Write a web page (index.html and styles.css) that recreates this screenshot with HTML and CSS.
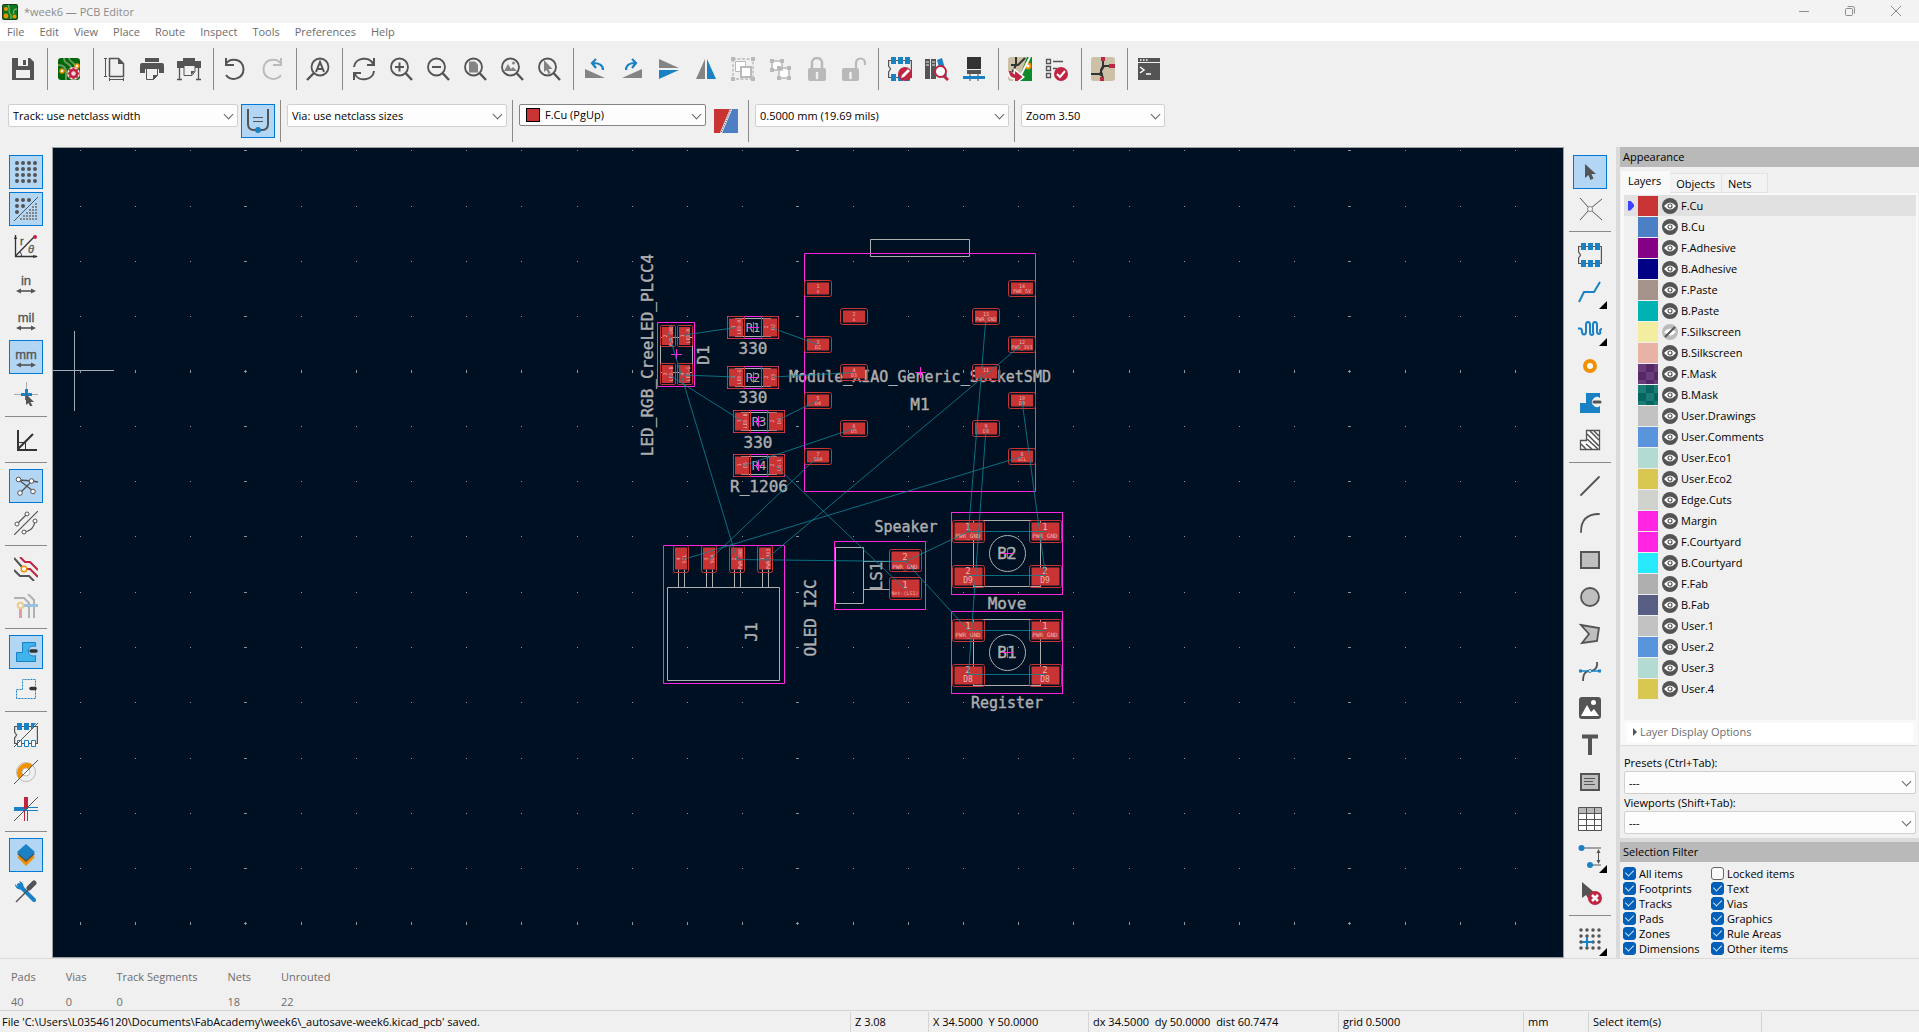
FILE: index.html
```html
<!DOCTYPE html>
<html lang="en">
<head>
    <meta charset="utf-8">
    <title>*week6 — PCB Editor</title>
    <link rel="stylesheet" href="styles.css">
</head>
<body>
    <!-- icon sprite -->
    <svg class="sprite" aria-hidden="true">
        <symbol id="i-app" viewBox="0 0 16 16">
            <rect width="16" height="16" rx="2" fill="#1d3b1f"/><rect x="1" y="1" width="14" height="14" rx="1" fill="#0b7a1c"/>
            <path d="M6 1c3 4-1 7 3 10v4M15 5c-4 0-4 3-3 5" fill="none" stroke="#7fae74" stroke-width="1.3"/>
            <circle cx="4" cy="5" r="2" fill="#f29100"/><circle cx="4" cy="12" r="2.4" fill="#f29100"/><circle cx="12.500" cy="12.500" r="2" fill="#f29100"/>
        </symbol>
        <symbol id="i-save" viewBox="0 0 24 24">
            <path d="M1 1h18l4 4v18H1z" fill="#545454"/><path d="M7 1h10v8H7zM5 13h14v8H5z" fill="#f0f0f0"/><path d="M12 3h3v5h-3z" fill="#545454"/>
        </symbol>
        <symbol id="i-board" viewBox="0 0 24 24">
            <rect x="1" y="1" width="22" height="22" rx="3" fill="#00660b"/>
            <path d="M7 1c0 7 7 5 7 10M12 1c0 4 6 4 6 8M1 8c5 0 8 2 8 7v8" fill="none" stroke="#679b5c" stroke-width="2"/>
            <circle cx="5" cy="14" r="2" fill="#fff" stroke="#f29100" stroke-width="1.500"/><circle cx="20" cy="9" r="2" fill="#fff" stroke="#f29100" stroke-width="1.500"/>
            <circle cx="16.500" cy="16.500" r="6.500" fill="#f5d9dd"/><circle cx="16.500" cy="16.500" r="3.500" fill="none" stroke="#bf2641" stroke-width="2.500"/>
            <path d="M16.500 10.500v3M16.500 19.500v3M10.500 16.500h3M19.500 16.500h3M12.300 12.300l2 2M18.700 18.700l2 2M20.700 12.300l-2 2M12.300 20.700l2-2" stroke="#bf2641" stroke-width="2"/>
        </symbol>
        <symbol id="i-page" viewBox="0 0 24 24">
            <path d="M6.500 1.500h9l5 5v13h-14z" fill="none" stroke="#545454" stroke-width="1.500"/><path d="M15 1v6h6z" fill="#545454"/>
            <path d="M2.500 1.500v18M1 1.500h3M1 19.500h3M6 22.500h15M6.500 21v3M20.500 21v3" stroke="#545454"/>
        </symbol>
        <symbol id="i-print" viewBox="0 0 24 24">
            <path d="M5 1h14v4H5zM2 6h20a2 2 0 0 1 2 2v8h-5v-4H5v4H0V8a2 2 0 0 1 2-2z" fill="#545454"/>
            <path d="M6.500 11.500h11v7l-4 4h-7z" fill="#f0f0f0" stroke="#545454"/><path d="M13 23v-5h5z" fill="#545454"/>
        </symbol>
        <symbol id="i-plot" viewBox="0 0 24 24">
            <path d="M6 1h12v3H6zM0 4h24v7H0z" fill="#545454"/><path d="M7 8.500h11v6l-3 4H7z" fill="#f0f0f0" stroke="#545454"/>
            <path d="M2.500 11v11M21.500 11v11M0 22.500h5M19 22.500h5" stroke="#545454" stroke-width="1.300"/><path d="M14 18v-4h4z" fill="#545454"/>
        </symbol>
        <symbol id="i-undo" viewBox="0 0 24 24">
            <path d="M3 6.500C8 0 20 2 20.500 12 20.500 22 8 25 3 18M3 1v7h8" fill="none" stroke="#545454" stroke-width="2"/>
        </symbol>
        <symbol id="i-redo" viewBox="0 0 24 24">
            <path d="M21 6.500C16 0 4 2 3.500 12 3.500 22 16 25 21 18M21 1v7h-8" fill="none" stroke="#bbb" stroke-width="2"/>
        </symbol>
        <symbol id="i-lens" viewBox="0 0 24 24">
            <circle cx="10.500" cy="10" r="8.500" fill="none" stroke="#545454" stroke-width="1.800"/><path d="M16.500 16l6.500 7" stroke="#545454" stroke-width="2.400"/>
        </symbol>
        <symbol id="i-find" viewBox="0 0 24 24">
            <circle cx="14" cy="10" r="8.500" fill="none" stroke="#545454" stroke-width="1.800"/><path d="M8 16l-7 7" stroke="#545454" stroke-width="2.400"/>
            <path d="M10 15l4-10 4 10M11.500 12h5" fill="none" stroke="#545454" stroke-width="2"/>
        </symbol>
        <symbol id="i-refresh" viewBox="0 0 24 24">
            <path d="M2 10C3 0 18-1 21 7M22 14C21 24 6 25 3 17M22 1v7h-7M2 23v-7h7" fill="none" stroke="#545454" stroke-width="2"/>
        </symbol>
        <symbol id="i-zoomin" viewBox="0 0 24 24"><use href="#i-lens"/><path d="M6 10h9M10.500 5.500v9" stroke="#545454" stroke-width="2"/></symbol>
        <symbol id="i-zoomout" viewBox="0 0 24 24"><use href="#i-lens"/><path d="M6 10h9" stroke="#545454" stroke-width="2"/></symbol>
        <symbol id="i-zoompage" viewBox="0 0 24 24"><use href="#i-lens"/><path d="M6 4.500h6l3 3v8H6z" fill="#848484"/></symbol>
        <symbol id="i-zoomobj" viewBox="0 0 24 24"><use href="#i-lens"/><path d="M4 14l4-7 3 5 2-2 4 4z" fill="#848484"/><circle cx="13.500" cy="6" r="1.500" fill="#848484"/></symbol>
        <symbol id="i-zoomsel" viewBox="0 0 24 24"><use href="#i-lens"/><path d="M7 3v12l2.500-2 2 4 2-1-2-4h4z" fill="#848484"/></symbol>
        <symbol id="i-ccw" viewBox="0 0 24 24"><path d="M2 12v9h20z" fill="#848484"/><path d="M20 13c0-5-4-7-10-7M13 2L9 6l4 5" fill="none" stroke="#1a81c4" stroke-width="2.200"/></symbol>
        <symbol id="i-cw" viewBox="0 0 24 24"><path d="M22 12v9H2z" fill="#848484"/><path d="M6 13c0-5 4-7 9-7M12 2l4 4-4 5" fill="none" stroke="#1a81c4" stroke-width="2.200"/></symbol>
        <symbol id="i-flipv" viewBox="0 0 24 24"><path d="M2 2v9h20z" fill="#848484"/><path d="M2 22v-9h20z" fill="#1a81c4"/></symbol>
        <symbol id="i-fliph" viewBox="0 0 24 24"><path d="M2 22h9V2z" fill="#848484"/><path d="M22 22h-9V2z" fill="#1a81c4"/></symbol>
        <symbol id="i-group" viewBox="0 0 24 24">
            <path d="M2 2h20v20H2z" fill="none" stroke="#b9b9b9" stroke-width="1.300" stroke-dasharray="3 1.500"/><path d="M0 0h4v4H0zM20 0h4v4h-4zM0 20h4v4H0zM20 20h4v4h-4z" fill="#b9b9b9"/>
            <path d="M4.500 4.500h10v10h-10z" fill="#fff" stroke="#b9b9b9"/><path d="M10 10h10v10H10z" fill="#fff" stroke="#b9b9b9" stroke-width="2"/>
        </symbol>
        <symbol id="i-ungroup" viewBox="0 0 24 24">
            <path d="M4 4h10v9H4zM11 11h10v10H11z" fill="#fff" stroke="#b9b9b9" stroke-width="1.500"/>
            <path d="M2 2h4v4H2zM12 2h4v4h-4zM2 11h4v4H2zM9 9h4v4H9zM19 9h4v4h-4zM9 19h4v4H9zM19 19h4v4h-4z" fill="#b9b9b9"/>
        </symbol>
        <symbol id="i-lock" viewBox="0 0 24 24"><path d="M7 12V6a5 5 0 0 1 10 0v6" fill="none" stroke="#b9b9b9" stroke-width="2.500"/><rect x="3" y="11" width="18" height="13" rx="2" fill="#b9b9b9"/><path d="M12 16v5" stroke="#f0f0f0" stroke-width="2.500" stroke-linecap="round"/></symbol>
        <symbol id="i-unlock" viewBox="0 0 24 24"><path d="M14 12V6a4.500 4.500 0 0 1 9 0v2" fill="none" stroke="#b9b9b9" stroke-width="2.200"/><rect x="0" y="11" width="17" height="13" rx="2" fill="#b9b9b9"/><path d="M8.500 16v5" stroke="#f0f0f0" stroke-width="2.500" stroke-linecap="round"/></symbol>
        <symbol id="i-fp" viewBox="0 0 24 24">
            <path d="M.6 3.500h22.800v17H.6V15l2-3-2-3z" fill="none" stroke="#545454" stroke-width="1.200"/>
            <path d="M3 0h5v7H3zM10 0h5v7h-5zM17 0h5v7h-5zM3 17h5v7H3zM10 17h5v7h-5zM17 17h5v7h-5z" fill="#1a81c4"/>
        </symbol>
        <symbol id="i-fpedit" viewBox="0 0 24 24"><use href="#i-fp"/><circle cx="17" cy="17" r="7" fill="#bf2641"/><path d="M13 21l1-3 6-6 2 2-6 6z" fill="#fff"/></symbol>
        <symbol id="i-library" viewBox="0 0 24 24">
            <path d="M0 2h5v20H0zM6 2h5v20H6z" fill="#545454"/><path d="M1 5h3M1 8h3M7 5h3M7 8h3" stroke="#f0f0f0"/><path d="M12 3l5-2 5 18-5 2z" fill="#1a81c4"/>
            <circle cx="15.500" cy="14.500" r="5.500" fill="#fff" stroke="#bf2641" stroke-width="2"/><path d="M19 19l4 4" stroke="#bf2641" stroke-width="3"/>
        </symbol>
        <symbol id="i-3d" viewBox="0 0 24 24"><path d="M5 0h14v12H5z" fill="#333"/><path d="M5 13h14v4H5z" fill="#545454"/><path d="M8 17v7M16 17v7" stroke="#848484" stroke-width="1.500"/><path d="M1 19h22v3H1z" fill="#1a81c4"/></symbol>
        <symbol id="i-sch2pcb" viewBox="0 0 24 24">
            <rect width="24" height="24" rx="3" fill="#ccc0a6"/><path d="M19 0h5v24H10z" fill="#0d8a2a"/><path d="M3 8h7l7-7M8 0v8l-4 8" fill="none" stroke="#333" stroke-width="2"/>
            <circle cx="20" cy="9" r="2.500" fill="#fff" stroke="#f29100" stroke-width="1.800"/><path d="M22 0L10 24" stroke="#fff" stroke-width="2"/>
            <path d="M2 15c0 6 4 5 8 5M8 16l5 4-5 4z" fill="none" stroke="#fff" stroke-width="5"/><path d="M2 14c0 6 4 6 8 6M8 16l5 4-5 4z" fill="#bf2641" stroke="#bf2641" stroke-width="2"/>
        </symbol>
        <symbol id="i-drc" viewBox="0 0 24 24">
            <path d="M1.500 2.500h4v4h-4zM1.500 9.500h4v4h-4zM1.500 16.500h4v4h-4z" fill="none" stroke="#545454" stroke-width="1.300"/><path d="M8 4.500h10M8 11.500h4" stroke="#545454" stroke-width="1.500"/>
            <circle cx="16" cy="17" r="7" fill="#bf2641"/><path d="M12 17l3 3 5-6" fill="none" stroke="#fff" stroke-width="2"/>
        </symbol>
        <symbol id="i-sch" viewBox="0 0 24 24">
            <rect width="24" height="24" rx="3" fill="#ccc0a6"/><path d="M10 0v4h4V0zM18 7h6v4h-6zM9 20h4v4H9z" fill="#bf2641"/><path d="M12 4v5l-2 4v4l2 3M18 9h-5l-3 5M0 17h9" fill="none" stroke="#333" stroke-width="2"/><circle cx="10" cy="17" r="2" fill="#333"/>
        </symbol>
        <symbol id="i-console" viewBox="0 0 24 24"><path d="M1 1h22v4H1zM1 6h22v17H1z" fill="#545454"/><path d="M3 3h1.500M6 3h1.500M9 3h1.500M3 10l4 3-4 3M9 17h5" fill="none" stroke="#fff" stroke-width="1.500"/></symbol>
        <symbol id="i-autotrack" viewBox="0 0 24 24"><path d="M2 0v15q0 6 6 6h8q6 0 6-6V0" fill="none" stroke="#545454" stroke-width="2"/><path d="M7 8.500h10M7 12.500h10" stroke="#545454" stroke-width="1.200"/><circle cx="12" cy="21" r="3" fill="#1a81c4"/></symbol>
        <symbol id="i-pair" viewBox="0 0 24 24"><path d="M0 0h17L7 24H0z" fill="#c83434"/><path d="M18 0h6v24H7z" fill="#4d7fc4"/><path d="M17 0L7 24" stroke="#fff" stroke-width="2"/><path d="M17 0L7 24" stroke="#333" stroke-dasharray="1 1"/></symbol>
        <symbol id="i-grid" viewBox="0 0 24 24"><path d="M3 3h19M3 9h19M3 15h19M3 21h19" stroke="#545454" stroke-width="4" stroke-linecap="round" stroke-dasharray="0 6"/></symbol>
        <symbol id="i-gridover" viewBox="0 0 24 24"><path d="M3 3h13M3 9h8M3 15h1" stroke="#545454" stroke-width="4" stroke-linecap="round" stroke-dasharray="0 6"/><path d="M21 7h2M18 10h5M15 13h8M12 16h11M9 19h14M6 22h17" stroke="#848484" stroke-width="2" stroke-dasharray="2 1"/><path d="M0 24L24 0" stroke="#545454"/></symbol>
        <symbol id="i-polar" viewBox="0 0 24 24"><path d="M1.500 1v21.500H23M1.500 22L20 3" fill="none" stroke="#333" stroke-width="1.300"/><path d="M0 5l1.500-4L3 5zM19 21l5 1.500-5 1.500z" fill="#333"/><path d="M6 18q2 2 1.500 5" fill="none" stroke="#333"/><circle cx="21" cy="3" r="2" fill="#bf2641"/></symbol>
        <symbol id="i-arrows" viewBox="0 0 24 24"><path d="M4 20h16" stroke="#545454" stroke-width="1.600"/><path d="M2 20l5-2.500v5zM22 20l-5-2.500v5z" fill="#545454"/></symbol>
        <symbol id="i-cursor" viewBox="0 0 24 24"><path d="M0 12.500h24M12.500 0v12" stroke="#aaa"/><path d="M7 12.500h11M12.500 7v11" stroke="#1a81c4" stroke-width="3"/><path d="M12 12v11l2.500-2 2 4 2-1-2-4h3.500z" fill="#545454"/></symbol>
        <symbol id="i-angle" viewBox="0 0 24 24"><path d="M4 2v20H23M4 21L19 6" fill="none" stroke="#333" stroke-width="2"/><path d="M5 14.500h6.500V21" fill="none" stroke="#333"/></symbol>
        <symbol id="i-rats" viewBox="0 0 24 24"><path d="M5 6l13 1 6 1M5 6l14 11M18 7L6 19" stroke="#545454" stroke-width="1.300" fill="none"/><g fill="#fff" stroke="#545454"><circle cx="4.500" cy="5.500" r="2.300"/><circle cx="17.500" cy="7" r="2.300"/><circle cx="19" cy="17.500" r="2.300"/><circle cx="6" cy="19" r="2.300"/></g></symbol>
        <symbol id="i-curved" viewBox="0 0 24 24"><path d="M0 24L24 0M3 13L13 3M11 21q9-2 10-11" fill="none" stroke="#545454" stroke-width="1.200"/><g fill="#fff" stroke="#545454"><circle cx="3" cy="13" r="2"/><circle cx="13" cy="3" r="2"/><circle cx="21" cy="10" r="2"/><circle cx="10" cy="21" r="2"/></g></symbol>
        <symbol id="i-netcolor" viewBox="0 0 24 24"><path d="M0 1l8 9M0 13l6 6h9l5 5" fill="none" stroke="#545454" stroke-width="2"/><path d="M6 0l5 5h5l8 8M12 12h4l8 8" fill="none" stroke="#bf2641" stroke-width="2"/><circle cx="10" cy="12" r="2.800" fill="#fff" stroke="#f29100" stroke-width="1.500"/></symbol>
        <symbol id="i-contrast" viewBox="0 0 24 24"><g opacity=".4"><path d="M0 4h10l5 5v15M14 0l6 6v18" fill="none" stroke="#545454" stroke-width="2"/><path d="M8 11.500h16" stroke="#1a81c4" stroke-width="3"/><path d="M6.500 14v10" stroke="#bf2641" stroke-width="3"/><circle cx="6.500" cy="11.500" r="2.800" fill="#fff" stroke="#f29100" stroke-width="2"/></g></symbol>
        <symbol id="i-zonefill" viewBox="0 0 24 24"><path d="M2.500 21.500v-9h6v-10h13v4a5 5 0 1 0 0 9v6z" fill="#3eb3ec" stroke="#1a81c4"/><path d="M17 11h5" stroke="#333" stroke-width="3.500" stroke-linecap="round"/></symbol>
        <symbol id="i-zoneline" viewBox="0 0 24 24"><path d="M2.500 21.500v-9h6v-10h13v19z" fill="none" stroke="#1a81c4" stroke-dasharray="2 1"/><path d="M17 11.500h4" stroke="#333" stroke-width="3.500" stroke-linecap="round"/></symbol>
        <symbol id="i-fpline" viewBox="0 0 24 24"><path d="M.6 3.500h22.800v17H.6V15l2-3-2-3z" fill="none" stroke="#545454" stroke-width="1.200"/><path d="M3 0h5v7H3zM10 0h5v7h-5zM17 0h5l-5 7z" fill="#1a81c4"/><path d="M3.500 17.500h4v6h-4zM10.500 17.500h4v6h-4zM17.500 17.500h4v6h-4z" fill="#fff" stroke="#1a81c4"/><path d="M0 24L24 0" stroke="#545454"/></symbol>
        <symbol id="i-vialine" viewBox="0 0 24 24"><circle cx="12" cy="12" r="9.500" fill="none" stroke="#bbb"/><circle cx="12" cy="12" r="4" fill="#fff" stroke="#bbb"/><path d="M5 19A10 10 0 0 1 19 5l-4 4a4 4 0 0 0-6 6z" fill="#f29100"/><path d="M0 24L24 0" stroke="#545454"/></symbol>
        <symbol id="i-trackline" viewBox="0 0 24 24"><path d="M0 12h13" stroke="#1a81c4" stroke-width="4"/><path d="M12 0v12" stroke="#bf2641" stroke-width="4"/><path d="M13 10.500h11M13 13.500h11" stroke="#1a81c4"/><path d="M10.500 13v11M13.500 13v11" stroke="#bf2641"/><path d="M0 24L24 0" stroke="#545454"/></symbol>
        <symbol id="i-layers" viewBox="0 0 24 24"><path d="M3 14l9 9 9-9-9-4z" fill="#f29100"/><path d="M3 11l9 8 9-8-9-5z" fill="#545454"/><path d="M12 1l9 8-9 8-9-8z" fill="#1a81c4"/></symbol>
        <symbol id="i-tools" viewBox="0 0 24 24"><path d="M5 5l15 15" stroke="#1a81c4" stroke-width="4" stroke-linecap="round"/><path d="M1 4a5.500 5.500 0 0 0 8 5 5.500 5.500 0 0 0-4-8l2 4-3 2z" fill="#1a81c4"/><path d="M2 22L14 10" stroke="#545454" stroke-width="1.500"/><path d="M15 8l5-5" stroke="#545454" stroke-width="5" stroke-linecap="round"/></symbol>
        <symbol id="i-select" viewBox="0 0 24 24"><path d="M7 4v14l3.500-3 2 5 3-1.500-2-4.500H18z" fill="#545454"/></symbol>
        <symbol id="i-local" viewBox="0 0 24 24"><path d="M2 1l9 10M24 2L13 11M2 23l9-10M24 23l-11-10" stroke="#545454"/><circle cx="12" cy="12" r="2.500" fill="#fff" stroke="#848484"/></symbol>
        <symbol id="i-route" viewBox="0 0 24 24"><path d="M1 22L6 12h10l6-10" fill="none" stroke="#1a81c4" stroke-width="2"/></symbol>
        <symbol id="i-tune" viewBox="0 0 24 24"><path d="M0 11.500h2q2 0 2 3t2 3 2-3V8q0-3 2-3t2 3v7q0 3 2 3t1-3V8q0-3 2-3t2 3v6q0 3 2 3t1-3q0-2 2-2h3" fill="none" stroke="#1a81c4" stroke-width="2"/></symbol>
        <symbol id="i-via" viewBox="0 0 24 24"><circle cx="12" cy="12" r="5" fill="#fff" stroke="#f29100" stroke-width="4"/></symbol>
        <symbol id="i-zone" viewBox="0 0 24 24"><path d="M2 22V12h6V2h14v5a5 5 0 1 0 0 8v7z" fill="#1a81c4"/><path d="M16 11h6" stroke="#545454" stroke-width="3" stroke-linecap="round"/></symbol>
        <symbol id="i-rule" viewBox="0 0 24 24"><path d="M2.500 21.500v-9h6v-10h13v19z" fill="#fff" stroke="#545454" stroke-width="1.300"/><path d="M12 3l9 9M9 6l12 12M9 11l11 10M8 16l6 5M3 16l5 5M16 3l5 5" stroke="#545454" stroke-width="1.600"/></symbol>
        <symbol id="i-line" viewBox="0 0 24 24"><path d="M3 21L21 3" stroke="#545454" stroke-width="1.800" stroke-linecap="round"/></symbol>
        <symbol id="i-arc" viewBox="0 0 24 24"><path d="M3 21Q3 3 21 3" fill="none" stroke="#545454" stroke-width="1.800" stroke-linecap="round"/></symbol>
        <symbol id="i-rect" viewBox="0 0 24 24"><path d="M3 4h18v16H3z" fill="#bfbfbf" stroke="#545454" stroke-width="2"/></symbol>
        <symbol id="i-circle" viewBox="0 0 24 24"><circle cx="12" cy="12" r="9" fill="#bfbfbf" stroke="#545454" stroke-width="1.800"/></symbol>
        <symbol id="i-poly" viewBox="0 0 24 24"><path d="M3 3l18 3-2 13-15 2 7-9z" fill="#bfbfbf" stroke="#545454" stroke-width="1.800"/></symbol>
        <symbol id="i-bezier" viewBox="0 0 24 24"><path d="M5 22c0-10 5-10 7-10s8-1 7-9" fill="none" stroke="#545454" stroke-width="1.800"/><path d="M2 12h20" stroke="#1a81c4" stroke-width="1.500"/><path d="M1 10.500h3v3H1zM20 10.500h3v3h-3z" fill="#1a81c4"/><circle cx="12" cy="12" r="1.500" fill="#fff" stroke="#1a81c4"/></symbol>
        <symbol id="i-image" viewBox="0 0 24 24"><rect x="1" y="1" width="22" height="22" rx="3" fill="#545454"/><path d="M3 20l6-11 4 7 3-3 5 7z" fill="#fff"/><circle cx="15.500" cy="6.500" r="2.500" fill="#fff"/></symbol>
        <symbol id="i-text" viewBox="0 0 24 24"><path d="M4 3.500h16M12 3v19" stroke="#545454" stroke-width="4"/></symbol>
        <symbol id="i-textbox" viewBox="0 0 24 24"><path d="M3 4h18v16H3z" fill="#bfbfbf" stroke="#545454" stroke-width="2"/><path d="M6 8.500h11M6 11.500h9M6 14.500h11" stroke="#545454" stroke-width="1.200"/></symbol>
        <symbol id="i-table" viewBox="0 0 24 24"><path d="M.5.500h23v23H.5z" fill="#fff" stroke="#545454"/><path d="M1 1h22v5H1z" fill="#b9b9b9"/><path d="M8.500 1v22M16.500 1v22M1 6.500h22M1 12.500h22M1 18.500h22" stroke="#545454"/></symbol>
        <symbol id="i-dim" viewBox="0 0 24 24"><path d="M4 4h19M13 21h10M20.500 6v13" stroke="#545454"/><path d="M20.500 5l2 4h-4zM20.500 20l2-4h-4z" fill="#545454"/><circle cx="3.500" cy="4" r="3" fill="#1a81c4"/><circle cx="12" cy="21" r="3" fill="#1a81c4"/></symbol>
        <symbol id="i-delete" viewBox="0 0 24 24"><path d="M4 1v16l4-3 3 5 4-2-3-5h5z" fill="#545454"/><circle cx="17" cy="17" r="7" fill="#bf2641"/><path d="M14 14l6 6M20 14l-6 6" stroke="#fff" stroke-width="2.500"/></symbol>
        <symbol id="i-origin" viewBox="0 0 24 24"><path d="M3 3h19M3 9h19M3 15h19M3 21h19" stroke="#545454" stroke-width="3.500" stroke-linecap="round" stroke-dasharray="0 6"/><path d="M4 15h11M9 10v10" stroke="#1a81c4" stroke-width="2"/></symbol>
        <symbol id="i-eye" viewBox="0 0 16 16"><circle cx="8" cy="8" r="8" fill="#545454"/><path d="M2 8q6-7 12 0-6 7-12 0z" fill="#fff"/><circle cx="8" cy="8" r="2" fill="#fff" stroke="#545454" stroke-width="1.200"/></symbol>
        <symbol id="i-eyeoff" viewBox="0 0 16 16"><circle cx="8" cy="8" r="8" fill="#bbb"/><path d="M2 8q6-7 12 0-6 7-12 0z" fill="#fff"/><path d="M3 13L13 3" stroke="#545454" stroke-width="2"/></symbol>
    </svg>

    <header class="titlebar">
        <svg class="app-icon"><use href="#i-app"/></svg>
        <h1>*week6 — PCB Editor</h1>
        <div class="window-buttons">
            <button aria-label="Minimize"><svg viewBox="0 0 10 10"><path d="M0 5.500h10"/></svg></button>
            <button aria-label="Restore"><svg viewBox="0 0 10 10"><path d="M.5 3.500q0-1 1-1h5q1 0 1 1v5q0 1-1 1h-5q-1 0-1-1zM2.500.500h5q2 0 2 2v5"/></svg></button>
            <button aria-label="Close"><svg viewBox="0 0 10 10"><path d="M0 0l10 10M10 0L0 10"/></svg></button>
        </div>
    </header>

    <nav class="menubar">
        <a href="#">File</a><a href="#">Edit</a><a href="#">View</a><a href="#">Place</a><a href="#">Route</a><a href="#">Inspect</a><a href="#">Tools</a><a href="#">Preferences</a><a href="#">Help</a>
    </nav>

    <div class="toolbar">
        <button class="tool" aria-label="Save"><svg><use href="#i-save"/></svg></button>
        <span class="sep"></span>
        <button class="tool" aria-label="Board setup"><svg><use href="#i-board"/></svg></button>
        <span class="sep"></span>
        <button class="tool" aria-label="Page settings"><svg><use href="#i-page"/></svg></button>
        <button class="tool" aria-label="Print"><svg><use href="#i-print"/></svg></button>
        <button class="tool" aria-label="Plot"><svg><use href="#i-plot"/></svg></button>
        <span class="sep"></span>
        <button class="tool" aria-label="Undo"><svg><use href="#i-undo"/></svg></button>
        <button class="tool" aria-label="Redo"><svg><use href="#i-redo"/></svg></button>
        <span class="sep"></span>
        <button class="tool" aria-label="Find"><svg><use href="#i-find"/></svg></button>
        <span class="sep"></span>
        <button class="tool" aria-label="Refresh"><svg><use href="#i-refresh"/></svg></button>
        <button class="tool" aria-label="Zoom in"><svg><use href="#i-zoomin"/></svg></button>
        <button class="tool" aria-label="Zoom out"><svg><use href="#i-zoomout"/></svg></button>
        <button class="tool" aria-label="Zoom to page"><svg><use href="#i-zoompage"/></svg></button>
        <button class="tool" aria-label="Zoom to objects"><svg><use href="#i-zoomobj"/></svg></button>
        <button class="tool" aria-label="Zoom to selection"><svg><use href="#i-zoomsel"/></svg></button>
        <span class="sep"></span>
        <button class="tool" aria-label="Rotate counterclockwise"><svg><use href="#i-ccw"/></svg></button>
        <button class="tool" aria-label="Rotate clockwise"><svg><use href="#i-cw"/></svg></button>
        <button class="tool" aria-label="Mirror vertically"><svg><use href="#i-flipv"/></svg></button>
        <button class="tool" aria-label="Mirror horizontally"><svg><use href="#i-fliph"/></svg></button>
        <button class="tool" aria-label="Group"><svg><use href="#i-group"/></svg></button>
        <button class="tool" aria-label="Ungroup"><svg><use href="#i-ungroup"/></svg></button>
        <button class="tool" aria-label="Lock"><svg><use href="#i-lock"/></svg></button>
        <button class="tool" aria-label="Unlock"><svg><use href="#i-unlock"/></svg></button>
        <span class="sep"></span>
        <button class="tool" aria-label="Footprint editor"><svg><use href="#i-fpedit"/></svg></button>
        <button class="tool" aria-label="Footprint library"><svg><use href="#i-library"/></svg></button>
        <button class="tool" aria-label="3D viewer"><svg><use href="#i-3d"/></svg></button>
        <span class="sep"></span>
        <button class="tool" aria-label="Update PCB from schematic"><svg><use href="#i-sch2pcb"/></svg></button>
        <button class="tool" aria-label="Design rules checker"><svg><use href="#i-drc"/></svg></button>
        <span class="sep"></span>
        <button class="tool" aria-label="Schematic editor"><svg><use href="#i-sch"/></svg></button>
        <span class="sep"></span>
        <button class="tool" aria-label="Scripting console"><svg><use href="#i-console"/></svg></button>
    </div>

    <div class="toolbar settings">
        <span class="combo track"><select aria-label="Track width"><option>Track: use netclass width</option></select></span>
        <button class="tool on" aria-label="Use existing track width"><svg><use href="#i-autotrack"/></svg></button>
        <span class="sep"></span>
        <span class="combo via"><select aria-label="Via size"><option>Via: use netclass sizes</option></select></span>
        <span class="sep"></span>
        <span class="combo layer"><i class="chip"></i><select aria-label="Active layer"><option>F.Cu (PgUp)</option></select></span>
        <button class="tool" aria-label="Layer pair"><svg><use href="#i-pair"/></svg></button>
        <span class="sep"></span>
        <span class="combo gridsize"><select aria-label="Grid"><option>0.5000 mm (19.69 mils)</option></select></span>
        <span class="sep"></span>
        <span class="combo zoom"><select aria-label="Zoom"><option>Zoom 3.50</option></select></span>
    </div>

    <main class="workspace">
        <div class="toolbar vertical">
            <button class="tool on" aria-label="Show grid"><svg><use href="#i-grid"/></svg></button>
            <button class="tool on" aria-label="Grid overrides"><svg><use href="#i-gridover"/></svg></button>
            <button class="tool" aria-label="Polar coordinates"><svg><use href="#i-polar"/><text x="6" y="11" class="icon-text">r</text><text x="14" y="19" class="icon-text italic">θ</text></svg></button>
            <button class="tool" aria-label="Inches"><svg><use href="#i-arrows"/><text x="12" y="14" class="icon-text mid">in</text></svg></button>
            <button class="tool" aria-label="Mils"><svg><use href="#i-arrows"/><text x="12" y="14" class="icon-text mid">mil</text></svg></button>
            <button class="tool on" aria-label="Millimeters"><svg><use href="#i-arrows"/><text x="12" y="14" class="icon-text mid">mm</text></svg></button>
            <button class="tool" aria-label="Full-window crosshairs"><svg><use href="#i-cursor"/></svg></button>
            <span class="sep"></span>
            <button class="tool" aria-label="Constrain to 45 degrees"><svg><use href="#i-angle"/></svg></button>
            <span class="sep"></span>
            <button class="tool on" aria-label="Show ratsnest"><svg><use href="#i-rats"/></svg></button>
            <button class="tool" aria-label="Curved ratsnest"><svg><use href="#i-curved"/></svg></button>
            <span class="sep"></span>
            <button class="tool" aria-label="Net highlighting"><svg><use href="#i-netcolor"/></svg></button>
            <button class="tool" aria-label="Inactive layer contrast"><svg><use href="#i-contrast"/></svg></button>
            <span class="sep"></span>
            <button class="tool on" aria-label="Filled zones"><svg><use href="#i-zonefill"/></svg></button>
            <button class="tool" aria-label="Zone outlines"><svg><use href="#i-zoneline"/></svg></button>
            <span class="sep"></span>
            <button class="tool" aria-label="Sketch pads"><svg><use href="#i-fpline"/></svg></button>
            <button class="tool" aria-label="Sketch vias"><svg><use href="#i-vialine"/></svg></button>
            <button class="tool" aria-label="Sketch tracks"><svg><use href="#i-trackline"/></svg></button>
            <span class="sep"></span>
            <button class="tool on" aria-label="Appearance manager"><svg><use href="#i-layers"/></svg></button>
            <button class="tool" aria-label="Properties"><svg><use href="#i-tools"/></svg></button>
        </div>

        <svg class="board" role="img" aria-label="Board layout">
            <defs>
                <path id="dots" d="M1 1.500h1M57 1.500h1M112 1.500h1M167 1.500h1M222 1.500h1M277 1.500h1M333 1.500h1M388 1.500h1M443 1.500h1M498 1.500h1"/>
                <!-- one major grid cell: every tenth row and column gets a longer tick -->
                <pattern id="gridp" x="244" y="370" width="552" height="552" patternUnits="userSpaceOnUse">
                    <g stroke="#8c939b">
                        <use href="#dots" y="-1"/><use href="#dots"/><use href="#dots" y="1"/><use href="#dots" y="55"/><use href="#dots" y="110"/><use href="#dots" y="165"/><use href="#dots" y="221"/>
                        <use href="#dots" y="276"/><use href="#dots" y="331"/><use href="#dots" y="387"/><use href="#dots" y="442"/><use href="#dots" y="497"/>
                        <path d="M0 1.500h3M0 56.500h3M0 111.500h3M0 166.500h3M0 222.500h3M0 277.500h3M0 332.500h3M0 388.500h3M0 443.500h3M0 498.500h3"/>
                    </g>
                </pattern>
                <g id="pad"><rect x="-13.500" y="-8" width="27" height="16" rx="2" class="ring"/><rect x="-11" y="-6" width="22" height="12" class="cu"/></g>
                <g id="bigpad"><rect x="-16" y="-11" width="32" height="22" rx="2" class="ring"/><rect x="-14" y="-9" width="28" height="18" class="cu"/></g>
                <g id="pinpad"><path d="M-2.500 11v17.500M3.500 11v17.500" class="fab"/><rect x="-7.500" y="-13" width="15" height="27" rx="2" class="ring"/><rect x="-6" y="-11" width="12" height="22" class="cu"/></g>
                <g id="ledpad"><rect x="-7.500" y="-10.500" width="15" height="21" rx="1" class="ring"/><rect x="-6" y="-9" width="11" height="18" class="cu"/></g>
                <g id="resistor">
                    <path d="M-18-9h36M-18 9h36" class="fab"/>
                    <rect x="-25.500" y="-11" width="51" height="22" class="crt"/>
                    <rect x="-25.500" y="-11" width="17" height="22" rx="1" class="ring"/><rect x="8.500" y="-11" width="17" height="22" rx="1" class="ring"/>
                    <rect x="-24" y="-9" width="14" height="18" class="cu"/><rect x="10" y="-9" width="14" height="18" class="cu"/>
                </g>
                <path id="cross" d="M-5.500 0h11M0-5.500v11" stroke="#ff26e2"/>
                <g id="button">
                    <rect x="-34" y="-33" width="67" height="66" class="fab"/><circle r="18" class="fab"/>
                    <rect x="-56" y="-41" width="111" height="82" class="crt"/>
                    <use href="#bigpad" x="-39" y="-22"/><use href="#bigpad" x="38" y="-22"/><use href="#bigpad" x="-39" y="23"/><use href="#bigpad" x="38" y="23"/>
                </g>
            </defs>
            <!-- board coordinates are window coordinates -->
            <g transform="translate(-53 -148)">
                <rect x="53" y="148" width="4000" height="3000" fill="url(#gridp)"/>

                <g class="fabtext">
                    <text x="753" y="354">330</text><text x="753" y="403">330</text><text x="758" y="448">330</text><text x="759" y="492">R_1206</text>
                    <text x="920" y="382" class="tight">Module_XIAO_Generic_SocketSMD</text><text x="920" y="410">M1</text>
                    <text x="906" y="532" class="tight">Speaker</text><text x="1007" y="609">Move</text><text x="1007" y="708" class="tight">Register</text>
                    <text transform="translate(653 355) rotate(-90)">LED_RGB_CreeLED_PLCC4</text>
                    <text transform="translate(709 355) rotate(-90)">D1</text>
                    <text transform="translate(757 632) rotate(-90)">J1</text>
                    <text transform="translate(816 618) rotate(-90)">OLED I2C</text>
                    <text transform="translate(882 576) rotate(-90)">LS1</text>
                </g>

                <!-- M1 -->
                <path d="M870.500 239.500h99v17h-99z" class="fab"/>
                <path d="M804.500 253.500h231v238h-231z" class="crt"/>
                <use href="#pad" x="818" y="288.500"/><use href="#pad" x="854" y="316.500"/><use href="#pad" x="818" y="344.500"/><use href="#pad" x="854" y="372.500"/>
                <use href="#pad" x="818" y="400.500"/><use href="#pad" x="854" y="428.500"/><use href="#pad" x="818" y="456.500"/>
                <use href="#pad" x="1022" y="288.500"/><use href="#pad" x="986" y="316.500"/><use href="#pad" x="1022" y="344.500"/><use href="#pad" x="986" y="372.500"/>
                <use href="#pad" x="1022" y="400.500"/><use href="#pad" x="986" y="428.500"/><use href="#pad" x="1022" y="456.500"/>
                <use href="#cross" x="920.500" y="372.500"/>
                <g class="net tiny">
                    <text x="818" y="288">1</text><text x="818" y="293">x</text><text x="854" y="316">2</text><text x="854" y="321">x</text>
                    <text x="818" y="344">3</text><text x="818" y="349">D2</text><text x="854" y="372">4</text><text x="854" y="377">D3</text>
                    <text x="818" y="400">5</text><text x="818" y="405">D4</text><text x="854" y="428">6</text><text x="854" y="433">D5</text>
                    <text x="818" y="456">7</text><text x="818" y="461">SDA</text>
                    <text x="1022" y="288">14</text><text x="1022" y="293">PWR_5V</text><text x="986" y="316">13</text><text x="986" y="321">PWR_GND</text>
                    <text x="1022" y="344">12</text><text x="1022" y="349">PWR_3V3</text><text x="986" y="372">11</text>
                    <text x="1022" y="400">10</text><text x="1022" y="405">D9</text><text x="986" y="428">9</text><text x="986" y="433">D8</text>
                    <text x="1022" y="456">8</text><text x="1022" y="461">SCL</text>
                </g>

                <!-- D1 -->
                <path d="M660.500 337.500h32v35h-32z" class="fab"/>
                <path d="M657.500 322.500h37v64h-37z" class="crt"/>
                <use href="#ledpad" x="668" y="336"/><use href="#ledpad" x="685" y="336"/><use href="#ledpad" x="668" y="374"/><use href="#ledpad" x="685" y="374"/>
                <use href="#cross" x="676.500" y="354.500"/>

                <!-- resistors -->
                <use href="#resistor" x="753" y="327.500"/><use href="#resistor" x="753" y="377.500"/><use href="#resistor" x="759" y="421.500"/><use href="#resistor" x="759" y="465.500"/>
                <g class="refs"><text x="753" y="332">R1</text><text x="753" y="382">R2</text><text x="759" y="426">R3</text><text x="759" y="470">R4</text></g>
                <use href="#cross" x="753.500" y="327.500"/><use href="#cross" x="753.500" y="377.500"/><use href="#cross" x="758.500" y="421.500"/><use href="#cross" x="758.500" y="465.500"/>
                <g class="net tiny">
                    <text transform="translate(735 327) rotate(-90)">1</text><text transform="translate(741 327) rotate(-90)">LED-R</text><text transform="translate(768 327) rotate(-90)">2</text><text transform="translate(775 327) rotate(-90)">D2</text>
                    <text transform="translate(735 377) rotate(-90)">1</text><text transform="translate(741 377) rotate(-90)">LED-G</text><text transform="translate(768 377) rotate(-90)">2</text><text transform="translate(775 377) rotate(-90)">D3</text>
                    <text transform="translate(741 421) rotate(-90)">1</text><text transform="translate(747 421) rotate(-90)">LED-B</text><text transform="translate(774 421) rotate(-90)">2</text><text transform="translate(781 421) rotate(-90)">D4</text>
                    <text transform="translate(741 465) rotate(-90)">1</text><text transform="translate(747 465) rotate(-90)">D5</text><text transform="translate(774 465) rotate(-90)">2</text><text transform="translate(781 465) rotate(-90)">LS-1</text>
                    <text transform="translate(667 336) rotate(-90)">2</text><text transform="translate(673 336) rotate(-90)">PWR_GND</text><text transform="translate(684 336) rotate(-90)">1</text><text transform="translate(690 336) rotate(-90)">LED-R</text>
                    <text transform="translate(667 374) rotate(-90)">3</text><text transform="translate(673 374) rotate(-90)">LED-B</text><text transform="translate(684 374) rotate(-90)">4</text><text transform="translate(690 374) rotate(-90)">LED-G</text>
                </g>

                <!-- J1 -->
                <path d="M667.500 587.500h112v93h-112z" class="fab"/>
                <use href="#pinpad" x="681" y="558.500"/><use href="#pinpad" x="709" y="558.500"/><use href="#pinpad" x="737" y="558.500"/><use href="#pinpad" x="765" y="558.500"/>
                <path d="M663.500 545.500h121v138h-121z" class="crt"/>
                <g class="net tiny">
                    <text transform="translate(680 559) rotate(-90)">4</text><text transform="translate(686 559) rotate(-90)">SCL</text>
                    <text transform="translate(708 559) rotate(-90)">3</text><text transform="translate(714 559) rotate(-90)">SDA</text>
                    <text transform="translate(736 559) rotate(-90)">2</text><text transform="translate(742 559) rotate(-90)">PWR_GND</text>
                    <text transform="translate(764 559) rotate(-90)">1</text><text transform="translate(770 559) rotate(-90)">PWR_3V3</text>
                </g>

                <!-- LS1 -->
                <path d="M835.500 547.500h28v56h-28zM863 561.500h26M863 589.500h26" class="fab"/>
                <path d="M834.500 541.500h91v68h-91z" class="crt"/>
                <use href="#bigpad" x="905.500" y="560.500"/><use href="#bigpad" x="905.500" y="588.500"/>
                <g class="net"><text x="905" y="560">2</text><text x="905" y="588">1</text></g>
                <g class="net small"><text x="905" y="569">PWR_GND</text></g>
                <g class="net tiny"><text x="905" y="595">Net-(LS1)</text></g>

                <!-- B1, B2 -->
                <use href="#button" x="1007.500" y="553.500"/><use href="#button" x="1007.500" y="652.500"/>
                <g class="net">
                    <text x="968" y="530">1</text><text x="1045" y="530">1</text><text x="968" y="574">2</text><text x="1045" y="574">2</text>
                    <text x="968" y="629">1</text><text x="1045" y="629">1</text><text x="968" y="673">2</text><text x="1045" y="673">2</text>
                </g>
                <g class="net small">
                    <text x="968" y="538">PWR_GND</text><text x="1045" y="538">PWR_GND</text><text x="968" y="637">PWR_GND</text><text x="1045" y="637">PWR_GND</text>
                    <text x="968" y="583" class="med">D9</text><text x="1045" y="583" class="med">D9</text>
                    <text x="968" y="682" class="med">D8</text><text x="1045" y="682" class="med">D8</text>
                </g>
                <g class="fabtext"><text x="1007" y="559">B2</text><text x="1007" y="658">B1</text></g>
                <use href="#cross" x="1007.500" y="553.500"/><use href="#cross" x="1007.500" y="652.500"/>

                <!-- ratsnest -->
                <path class="rats" d="M684 335L736 327.500M772 328L818 344.500M683 375L736 377M773 377L854 372.500M669 375L742 421M778 420L818 400.500
                    M854 428.500L744 465.500M775.500 465.500L905.500 589.500M668.500 333L737 559.500M818 456.500L710 559.500M1022 456.500L683 559.500M1022 344.500L765 560
                    M737 559.500L905.500 561.500L968.500 531.500M905.500 561.500L968.500 630.500M986 316.500L968.500 531.500M986 428.500L968.500 674.500M1022 400.500L1045.500 575.500
                    M968.500 531.500h77M968.500 575.500h77M968.500 630.500h77M968.500 674.500h77"/>

                <path d="M74.500 331v80M53 370.500h61" stroke="#a5abb2"/>
            </g>
        </svg>

        <div class="toolbar vertical">
            <button class="tool on" aria-label="Select"><svg><use href="#i-select"/></svg></button>
            <button class="tool" aria-label="Local ratsnest"><svg><use href="#i-local"/></svg></button>
            <span class="sep"></span>
            <button class="tool" aria-label="Add footprint"><svg><use href="#i-fp"/></svg></button>
            <button class="tool more" aria-label="Route tracks"><svg><use href="#i-route"/></svg></button>
            <button class="tool more" aria-label="Tune length"><svg><use href="#i-tune"/></svg></button>
            <button class="tool" aria-label="Add via"><svg><use href="#i-via"/></svg></button>
            <button class="tool" aria-label="Add zone"><svg><use href="#i-zone"/></svg></button>
            <button class="tool" aria-label="Add rule area"><svg><use href="#i-rule"/></svg></button>
            <span class="sep"></span>
            <button class="tool" aria-label="Line"><svg><use href="#i-line"/></svg></button>
            <button class="tool" aria-label="Arc"><svg><use href="#i-arc"/></svg></button>
            <button class="tool" aria-label="Rectangle"><svg><use href="#i-rect"/></svg></button>
            <button class="tool" aria-label="Circle"><svg><use href="#i-circle"/></svg></button>
            <button class="tool" aria-label="Polygon"><svg><use href="#i-poly"/></svg></button>
            <button class="tool" aria-label="Bezier"><svg><use href="#i-bezier"/></svg></button>
            <button class="tool" aria-label="Image"><svg><use href="#i-image"/></svg></button>
            <button class="tool" aria-label="Text"><svg><use href="#i-text"/></svg></button>
            <button class="tool" aria-label="Text box"><svg><use href="#i-textbox"/></svg></button>
            <button class="tool" aria-label="Table"><svg><use href="#i-table"/></svg></button>
            <button class="tool more" aria-label="Dimension"><svg><use href="#i-dim"/></svg></button>
            <button class="tool" aria-label="Delete"><svg><use href="#i-delete"/></svg></button>
            <span class="sep"></span>
            <button class="tool more" aria-label="Grid origin"><svg><use href="#i-origin"/></svg></button>
        </div>

        <aside class="panel">
            <h2>Appearance</h2>
            <div class="tabs">
                <button class="active">Layers</button><button>Objects</button><button>Nets</button>
            </div>
            <div class="tabpage">
                <ul class="layers">
                    <li class="current"><i class="sw c-fcu"></i><button aria-label="Toggle F.Cu"><svg><use href="#i-eye"/></svg></button>F.Cu</li>
                    <li><i class="sw c-bcu"></i><button aria-label="Toggle B.Cu"><svg><use href="#i-eye"/></svg></button>B.Cu</li>
                    <li><i class="sw c-fadh"></i><button aria-label="Toggle F.Adhesive"><svg><use href="#i-eye"/></svg></button>F.Adhesive</li>
                    <li><i class="sw c-badh"></i><button aria-label="Toggle B.Adhesive"><svg><use href="#i-eye"/></svg></button>B.Adhesive</li>
                    <li><i class="sw c-fpaste"></i><button aria-label="Toggle F.Paste"><svg><use href="#i-eye"/></svg></button>F.Paste</li>
                    <li><i class="sw c-bpaste"></i><button aria-label="Toggle B.Paste"><svg><use href="#i-eye"/></svg></button>B.Paste</li>
                    <li><i class="sw c-fsilk"></i><button aria-label="Toggle F.Silkscreen"><svg><use href="#i-eyeoff"/></svg></button>F.Silkscreen</li>
                    <li><i class="sw c-bsilk"></i><button aria-label="Toggle B.Silkscreen"><svg><use href="#i-eye"/></svg></button>B.Silkscreen</li>
                    <li><i class="sw c-fmask"></i><button aria-label="Toggle F.Mask"><svg><use href="#i-eye"/></svg></button>F.Mask</li>
                    <li><i class="sw c-bmask"></i><button aria-label="Toggle B.Mask"><svg><use href="#i-eye"/></svg></button>B.Mask</li>
                    <li><i class="sw c-gray"></i><button aria-label="Toggle User.Drawings"><svg><use href="#i-eye"/></svg></button>User.Drawings</li>
                    <li><i class="sw c-blue"></i><button aria-label="Toggle User.Comments"><svg><use href="#i-eye"/></svg></button>User.Comments</li>
                    <li><i class="sw c-mint"></i><button aria-label="Toggle User.Eco1"><svg><use href="#i-eye"/></svg></button>User.Eco1</li>
                    <li><i class="sw c-gold"></i><button aria-label="Toggle User.Eco2"><svg><use href="#i-eye"/></svg></button>User.Eco2</li>
                    <li><i class="sw c-edge"></i><button aria-label="Toggle Edge.Cuts"><svg><use href="#i-eye"/></svg></button>Edge.Cuts</li>
                    <li><i class="sw c-pink"></i><button aria-label="Toggle Margin"><svg><use href="#i-eye"/></svg></button>Margin</li>
                    <li><i class="sw c-pink"></i><button aria-label="Toggle F.Courtyard"><svg><use href="#i-eye"/></svg></button>F.Courtyard</li>
                    <li><i class="sw c-cyan"></i><button aria-label="Toggle B.Courtyard"><svg><use href="#i-eye"/></svg></button>B.Courtyard</li>
                    <li><i class="sw c-ffab"></i><button aria-label="Toggle F.Fab"><svg><use href="#i-eye"/></svg></button>F.Fab</li>
                    <li><i class="sw c-bfab"></i><button aria-label="Toggle B.Fab"><svg><use href="#i-eye"/></svg></button>B.Fab</li>
                    <li><i class="sw c-gray"></i><button aria-label="Toggle User.1"><svg><use href="#i-eye"/></svg></button>User.1</li>
                    <li><i class="sw c-blue"></i><button aria-label="Toggle User.2"><svg><use href="#i-eye"/></svg></button>User.2</li>
                    <li><i class="sw c-mint"></i><button aria-label="Toggle User.3"><svg><use href="#i-eye"/></svg></button>User.3</li>
                    <li><i class="sw c-gold"></i><button aria-label="Toggle User.4"><svg><use href="#i-eye"/></svg></button>User.4</li>
                </ul>
                <button class="expander">Layer Display Options</button>
            </div>
            <div class="presets">
                <label for="presets">Presets (Ctrl+Tab):</label>
                <span class="combo"><select id="presets"><option>---</option></select></span>
                <label for="viewports">Viewports (Shift+Tab):</label>
                <span class="combo"><select id="viewports"><option>---</option></select></span>
            </div>
            <h2>Selection Filter</h2>
            <div class="filter">
                <label><input type="checkbox" checked>All items</label><label><input type="checkbox">Locked items</label>
                <label><input type="checkbox" checked>Footprints</label><label><input type="checkbox" checked>Text</label>
                <label><input type="checkbox" checked>Tracks</label><label><input type="checkbox" checked>Vias</label>
                <label><input type="checkbox" checked>Pads</label><label><input type="checkbox" checked>Graphics</label>
                <label><input type="checkbox" checked>Zones</label><label><input type="checkbox" checked>Rule Areas</label>
                <label><input type="checkbox" checked>Dimensions</label><label><input type="checkbox" checked>Other items</label>
            </div>
        </aside>
    </main>

    <section class="info">
        <table>
            <tr><th>Pads</th><th>Vias</th><th>Track Segments</th><th>Nets</th><th>Unrouted</th></tr>
            <tr><td>40</td><td>0</td><td>0</td><td>18</td><td>22</td></tr>
        </table>
    </section>

    <footer class="statusbar">
        <span class="message">File 'C:\Users\L03546120\Documents\FabAcademy\week6\_autosave-week6.kicad_pcb' saved.</span>
        <span class="w-zoom">Z 3.08</span>
        <span class="w-pos">X 34.5000&nbsp; Y 50.0000</span>
        <span class="w-delta">dx 34.5000&nbsp; dy 50.0000&nbsp; dist 60.7474</span>
        <span class="w-grid">grid 0.5000</span>
        <span class="w-unit">mm</span>
        <span class="w-tool">Select item(s)</span>
        <span class="w-last"></span>
    </footer>
</body>
</html>
```

FILE: styles.css
```css
* {
    box-sizing: border-box;
}
body {
    margin: 0;
    height: 100vh;
    display: flex;
    flex-direction: column;
    background: #f0f0f0;
    color: #000;
    font-family: "Open Sans", "Noto Sans", sans-serif;
    font-size: 11px;
    line-height: 16px;
}
button, select {
    font: inherit;
    color: inherit;
}
button {
    padding: 0;
    border: 0;
    background: none;
}
h1, h2 {
    margin: 0;
    font-size: inherit;
    font-weight: normal;
}
.sprite {
    position: absolute;
    width: 0;
    height: 0;
}

/* title bar and menu */
.titlebar {
    display: flex;
    align-items: center;
    gap: 6px;
    height: 23px;
    padding-left: 2px;
    background: #f3f3f3;
    color: #8c8c8c;
}
.app-icon {
    width: 16px;
    height: 16px;
}
.window-buttons {
    display: flex;
    margin-left: auto;
}
.window-buttons button {
    width: 46px;
    height: 20px;
}
.window-buttons svg {
    width: 10px;
    height: 10px;
    fill: none;
    stroke: #8c8c8c;
    overflow: visible;
}
.menubar {
    display: flex;
    align-items: center;
    gap: 15px;
    height: 18px;
    padding-left: 7px;
    background: #fff;
}
.menubar a {
    color: #6d6d6d;
    text-decoration: none;
}

/* toolbars */
.toolbar {
    display: flex;
    gap: 3px;
    height: 55px;
    padding: 7px 6px 0;
}
.tool {
    position: relative;
    display: flex;
    flex: none;
    align-items: center;
    justify-content: center;
    width: 34px;
    height: 34px;
    margin-top: 4px;
}
.tool svg {
    width: 24px;
    height: 24px;
    overflow: visible;
}
.tool.on {
    background: #b3d6f4;
    border: 1px solid #0078d7;
}
.tool.more::after {
    content: "";
    position: absolute;
    right: 0;
    bottom: 0;
    border: 4px solid;
    border-color: transparent #000 #000 transparent;
}
.sep {
    flex: none;
    width: 1px;
    height: 42px;
    margin: 0 1px 0 4px;
    background: #8a8a8a;
}
.settings {
    height: 51px;
    padding: 4px 8px 0;
}
.settings .sep {
    margin: 0 3px 0 2px;
}
.vertical {
    flex: none;
    flex-direction: column;
    align-items: center;
    width: 52px;
    height: auto;
    padding: 8px 5px 0;
}
.vertical .tool {
    margin-top: 0;
}
.vertical .sep {
    width: 42px;
    height: 1px;
    margin: 2px 0 3px;
}
.icon-text {
    font: 11px "Liberation Sans", sans-serif;
    fill: #545454;
    stroke: #545454;
    stroke-width: .3px;
}
.icon-text.mid {
    font-size: 13px;
    text-anchor: middle;
}
.icon-text.italic {
    font-style: italic;
}

/* drop-downs */
.combo {
    position: relative;
    display: block;
    height: 23px;
}
.settings .combo {
    margin-top: 4px;
}
.combo select {
    appearance: none;
    display: block;
    width: 100%;
    height: 23px;
    padding: 0 20px 0 4px;
    border: 1px solid #d0d0d0;
    border-radius: 2px;
    background: #fdfdfd;
}
.combo::after {
    content: "";
    position: absolute;
    right: 6px;
    top: 7px;
    width: 6px;
    height: 6px;
    border: solid #666;
    border-width: 0 1px 1px 0;
    transform: rotate(45deg);
}
.track { width: 230px; }
.via { width: 220px; }
.layer { width: 187px; }
.gridsize { width: 254px; }
.zoom { width: 144px; }
.layer select {
    height: 22px;
    padding-left: 25px;
    border-color: #858585;
}
.chip {
    position: absolute;
    left: 7px;
    top: 4px;
    width: 14px;
    height: 14px;
    border: 1px solid #000;
    background: #c83434;
}

/* board */
.workspace {
    display: flex;
    flex: 1;
    min-height: 0;
}
.board {
    flex: 1;
    min-width: 0;
    border: 1px solid #a0a0a0;
    background: #001023;
}
.board .fab { fill: none; stroke: #afafaf; }
.board .crt { fill: none; stroke: #ff26e2; }
.board .ring { fill: none; stroke: #c83434; }
.board .cu { fill: #c83434; }
.board .rats { fill: none; stroke: #0f8696; stroke-opacity: .8; }
.fabtext, .refs, .net {
    font-family: "DejaVu Sans Mono", monospace;
    text-anchor: middle;
    fill: #afafaf;
}
.fabtext {
    font-size: 16px;
    stroke: #afafaf;
    stroke-width: .4px;
}
.fabtext .tight { font-size: 15px; }
.refs { font-size: 12px; }
.net { font-size: 9px; fill: #e8b4b4; }
.net.small { font-size: 6px; }
.net .med { font-size: 8px; }
.net.tiny { font-size: 5px; }

/* right panel */
.panel {
    display: flex;
    flex: none;
    flex-direction: column;
    width: 303px;
    border-left: 4px solid #dadada;
}
.panel h2 {
    height: 21px;
    padding-left: 3px;
    background: #b9b9b9;
    line-height: 20px;
}
.tabs {
    display: flex;
    align-items: flex-end;
    height: 26px;
    padding: 4px 1px 0;
}
.tabs button {
    height: 20px;
    padding: 2px 6px 0;
    border: 1px solid #e3e3e3;
    border-left: 0;
    background: #f3f3f3;
}
.tabs button:last-child {
    padding: 2px 15px 0 6px;
}
.tabs .active {
    height: 22px;
    padding: 0 9px 2px 7px;
    border: 0;
    background: #f9f9f9;
}
.tabpage {
    margin: 0 1px;
    padding: 2px 2px 3px 3px;
    border-bottom: 1px solid #dcdcdc;
    background: #f9f9f9;
}
.layers {
    height: 525px;
    margin: 0;
    padding: 0;
    list-style: none;
    background: #f0f0f0;
}
.layers li {
    display: flex;
    align-items: center;
    gap: 4px;
    height: 21px;
    padding-left: 14px;
}
.layers .current {
    padding-left: 4px;
    background: #e1e1e1;
}
.current::before {
    content: "";
    width: 6px;
    height: 10px;
    background: #4040ff;
    clip-path: polygon(0 0, 40% 0, 100% 40%, 100% 60%, 40% 100%, 0 100%);
}
.layers button, .layers svg {
    display: block;
    width: 16px;
    height: 16px;
}
.layers li button { margin-right: -1px; }
.sw {
    width: 20px;
    height: 20px;
}
.c-fcu { background: #c83434; }
.c-bcu { background: #4d7fc4; }
.c-fadh { background: #840084; }
.c-badh { background: #000084; }
.c-fpaste { background: #a5938c; }
.c-bpaste { background: #00b3b3; }
.c-fsilk { background: #f2eda1; }
.c-bsilk { background: #e8b2a7; }
.c-fmask { background: conic-gradient(#6b3b7c 25%, #552864 0 50%, #6b3b7c 0 75%, #552864 0) 0 -8px / 16px 16px; }
.c-bmask { background: conic-gradient(#1a7c74 25%, #02665f 0 50%, #1a7c74 0 75%, #02665f 0) 0 -8px / 16px 16px; }
.c-gray { background: #c2c2c2; }
.c-blue { background: #5994dc; }
.c-mint { background: #b4dbd2; }
.c-gold { background: #d8c852; }
.c-edge { background: #d0d2cd; }
.c-pink { background: #ff26e2; }
.c-cyan { background: #26e9ff; }
.c-ffab { background: #afafaf; }
.c-bfab { background: #585d84; }
.expander {
    display: flex;
    align-items: center;
    gap: 3px;
    width: calc(100% - 6px);
    height: 19px;
    margin: 3px 3px 0;
    padding: 0 0 2px 6px;
    background: #fff;
    color: #6d6d6d;
}
.expander::before {
    content: "";
    border: 4px solid transparent;
    border-width: 4px 0 4px 4px;
    border-left-color: #545454;
}
.presets {
    padding: 9px 3px 4px 4px;
    border-bottom: 4px solid #dadada;
}
.presets label {
    display: block;
    height: 16px;
}
.presets .combo + label {
    margin-top: 1px;
}
.filter {
    display: grid;
    grid-template-columns: 88px 1fr;
    grid-auto-rows: 15px;
    padding: 4px 3px 5px;
}
.filter label {
    display: flex;
    align-items: center;
    gap: 3px;
}
.filter input {
    appearance: none;
    display: flex;
    justify-content: center;
    width: 13px;
    height: 13px;
    margin: 0;
    border: 1px solid #666;
    border-radius: 3px;
    background: #fafafa;
}
.filter input:checked {
    border-color: #005fb8;
    background: #005fb8;
}
.filter input:checked::after {
    content: "";
    width: 4px;
    height: 7px;
    border: solid #dbe9f6;
    border-width: 0 1px 1px 0;
    transform: rotate(45deg);
}

/* bottom */
.info {
    height: 52px;
    padding: 10px 11px 0;
    border-top: 1px solid #dadada;
    color: #6d6d6d;
}
.info table {
    border-collapse: collapse;
}
.info th, .info td {
    height: 25px;
    padding: 0 30px 0 0;
    font-weight: normal;
    text-align: left;
    vertical-align: top;
}
.statusbar {
    display: flex;
    height: 22px;
    border-top: 1px solid #d4d4d4;
    white-space: nowrap;
}
.statusbar span {
    flex: none;
    margin-top: 1px;
    padding: 2px 4px 0;
    border-left: 1px solid #d4d4d4;
}
.statusbar .message {
    flex: 1;
    padding-left: 2px;
    border-left: 0;
}
.w-zoom { width: 78px; }
.w-pos { width: 160px; }
.w-delta { width: 250px; }
.w-grid { width: 185px; }
.w-unit { width: 65px; }
.w-tool { width: 173px; }
.w-last { width: 158px; }
```
